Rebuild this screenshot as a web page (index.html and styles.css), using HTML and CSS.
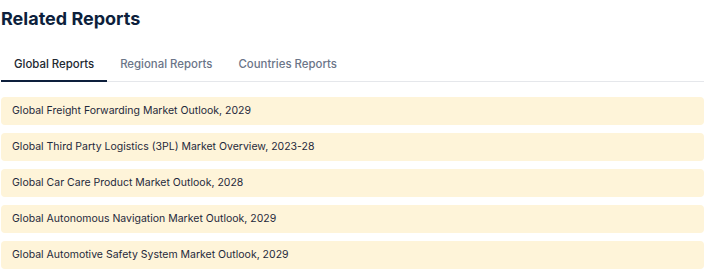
FILE: index.html
```html
<!DOCTYPE html>
<html lang="en">
<head>
    <meta charset="UTF-8">
    <meta name="viewport" content="width=device-width, initial-scale=1.0">
    <title>Related Reports</title>
    <link rel="stylesheet" href="styles.css">
</head>
<body>

<div class="related">
    <h2 class="related-title">Related Reports</h2>

    <div class="tabs">
        <button class="tab active">Global Reports</button>
        <button class="tab">Regional Reports</button>
        <button class="tab">Countries Reports</button>
    </div>

    <ul class="report-list">
        <li class="report-item">Global Freight Forwarding Market Outlook, 2029</li>
        <li class="report-item">Global Third Party Logistics (3PL) Market Overview, 2023-28</li>
        <li class="report-item">Global Car Care Product Market Outlook, 2028</li>
        <li class="report-item">Global Autonomous Navigation Market Outlook, 2029</li>
        <li class="report-item">Global Automotive Safety System Market Outlook, 2029</li>
    </ul>
</div>

</body>
</html>
```

FILE: styles.css
```css
body {
    margin: 0;
    font-family: Inter, "Liberation Sans", sans-serif;
    background-color: #fff;
}
.related {
    padding: 0 6px 0 1px;
}
.related-title {
    margin: 0;
    padding-top: 7px;
    font-size: 18px;
    line-height: 24px;
    font-weight: 700;
    color: #0d1f3c;
}
.tabs {
    display: flex;
    margin-top: 22px;
    border-bottom: 1px solid #e5e7eb;
}
.tab {
    background: none;
    border: none;
    border-bottom: 2px solid transparent;
    margin-bottom: -1px;
    padding: 4px 13px 9px;
    font-family: inherit;
    font-size: 11.4px;
    line-height: 14px;
    font-weight: 500;
    color: #6b7588;
    cursor: pointer;
}
.tab.active {
    color: #222831;
    border-bottom-color: #0d1f3c;
}
.report-list {
    list-style: none;
    margin: 15px 0 0;
    padding: 0;
    display: flex;
    flex-direction: column;
    gap: 8px;
}
.report-item {
    background-color: #fef4d9;
    border-radius: 4px;
    height: 28px;
    line-height: 28px;
    padding: 0 11px;
    font-size: 10.5px;
    color: #1e293b;
}
```
